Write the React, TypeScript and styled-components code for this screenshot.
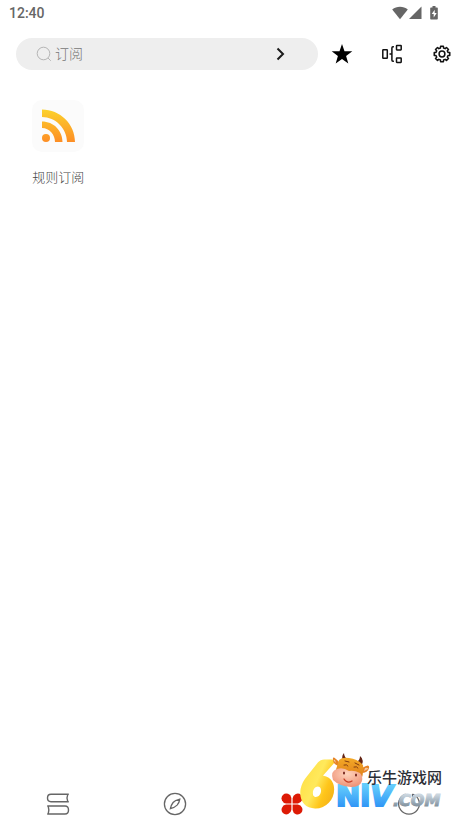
import React from "react";
import styled, { createGlobalStyle } from "styled-components";

const GlobalStyle = createGlobalStyle`
  *, *::before, *::after { box-sizing: border-box; }
  body {
    margin: 0;
    background: #fff;
    font-family: Roboto, "Noto Sans CJK SC", sans-serif;
  }
  button { border: 0; padding: 0; background: none; font: inherit; color: inherit; cursor: pointer; }
  svg { display: block; }
`;

const Screen = styled.div`
  position: relative;
  display: flex;
  flex-direction: column;
  min-height: 100vh;
  background: #fff;
`;

const StatusBar = styled.div`
  display: flex;
  align-items: center;
  justify-content: space-between;
  height: 26px;
  padding: 0 28px 0 9px;
  color: #666;
  font-size: 14px;
  font-weight: 500;
`;

const StatusIcons = styled.div`
  display: flex;
  align-items: center;
`;

const Header = styled.header`
  display: flex;
  align-items: center;
  padding: 12px 13px 0 16px;
`;

const SearchBox = styled.form`
  display: flex;
  flex: 1;
  min-width: 0;
  align-items: center;
  height: 32px;
  padding: 0 26px 0 20px;
  border-radius: 16px;
  background: #eee;
`;

const SearchInput = styled.input`
  flex: 1;
  min-width: 0;
  height: 24px;
  margin-left: 3px;
  padding: 0 0 2px;
  border: 0;
  outline: 0;
  background: none;
  font-family: "Noto Sans CJK SC", sans-serif;
  font-size: 14px;
  font-weight: 300;
  color: #333;
  &::placeholder { color: #777; opacity: 1; }
`;

const Actions = styled.div`
  display: flex;
  gap: 26px;
  margin-left: 12px;
`;

const IconButton = styled.button`
  display: grid;
  place-items: center;
  width: 24px;
  height: 24px;
`;

const Main = styled.main`
  flex: 1;
  display: grid;
  grid-template-columns: repeat(4, 1fr);
  align-items: start;
  padding-top: 30px;
`;

const Source = styled.button`
  display: flex;
  flex-direction: column;
  align-items: center;
  gap: 15px;
`;

const SourceIcon = styled.span`
  display: grid;
  place-items: center;
  width: 52px;
  height: 52px;
  border-radius: 10px;
  background: #fbfbfb;
`;

const SourceName = styled.span`
  font-family: "Noto Sans CJK SC", sans-serif;
  font-size: 13px;
  font-weight: 300;
  line-height: 20px;
  color: #444;
`;

const TabBar = styled.nav`
  display: grid;
  grid-template-columns: repeat(4, 1fr);
  height: 52px;
`;

const Tab = styled.button<{ $active?: boolean }>`
  display: grid;
  place-items: center;
  color: ${(p) => (p.$active ? "#dd1a05" : "#666")};
`;

const Watermark = styled.div`
  position: absolute;
  right: 20px;
  bottom: 12px;
  pointer-events: none;
`;

const WifiIcon = () => (
  <svg width="16" height="14" viewBox="0 0 16 14" fill="#666">
    <path d="M8 13.2.2 3.6C4.5-.2 11.500-.2 15.800 3.600Z" />
  </svg>
);
const SignalIcon = () => (
  <svg width="14" height="14" viewBox="0 0 14 14" fill="#666">
    <path d="M13.500.5v12.500H1Z" />
  </svg>
);
const BatteryIcon = () => (
  <svg width="17" height="14" viewBox="0 0 17 14">
    <path fill="#666" d="M10.500 0h3v1.500H15a.8.8 0 0 1 .8.8v10.400a.8.8 0 0 1-.8.8H9a.8.8 0 0 1-.8-.8V2.300a.8.8 0 0 1 .8-.8h1.500z" />
    <path fill="#fff" d="m12.700 3.800-3 4.200h2v3.500l3-4.600h-2z" />
  </svg>
);
const SearchIcon = () => (
  <svg width="16" height="16" viewBox="0 0 16 16" fill="none" stroke="#b5b5b5" strokeWidth="1">
    <circle cx="7.500" cy="7.500" r="6.300" />
    <path d="m12 12 2.800 2.800" />
  </svg>
);
const ChevronIcon = () => (
  <svg width="12" height="14" viewBox="0 0 12 14" fill="none" stroke="#1b1b1b" strokeWidth="2">
    <path d="m3.500 1.500 5.500 5.500-5.500 5.500" />
  </svg>
);
const StarIcon = () => (
  <svg width="22" height="22" viewBox="0 0 22 22" fill="#000">
    <path d="m11 1 2.500 7.200 7.800.1-6.200 4.700 2.200 7.500-6.300-4.400-6.300 4.400L6.900 13 .7 8.300l7.800-.1Z" />
  </svg>
);
const TreeIcon = () => (
  <svg width="22" height="20" viewBox="0 0 22 20" fill="none" stroke="#111" strokeWidth="1.500">
    <rect x="1.800" y="5.800" width="4.500" height="8.400" rx=".5" />
    <path d="M12.900 2.800h-1q-1 0-1 1.200v12q0 1.200 1 1.200h1M8.500 10h2.400" />
    <rect x="15.500" y="1.500" width="4.700" height="4.500" rx=".4" />
    <rect x="15.500" y="14" width="4.700" height="4.500" rx=".4" />
  </svg>
);

const gearPath = (() => {
  const points: string[] = [];
  const teeth = 8;
  for (let i = 0; i < teeth; i++) {
    const base = (i / teeth) * Math.PI * 2;
    [[-0.25, 6.2], [-0.18, 7.9], [0.18, 7.9], [0.25, 6.2]].forEach(([a, r]) => {
      points.push(`${(9 + Math.cos(base + a) * r).toFixed(2)} ${(9 + Math.sin(base + a) * r).toFixed(2)}`);
    });
  }
  return `M${points.join("L")}Z`;
})();
const GearIcon = () => (
  <svg width="18" height="18" viewBox="0 0 18 18" fill="none" stroke="#111" strokeWidth="1.500" strokeLinejoin="round">
    <path d={gearPath} />
    <circle cx="9" cy="9" r="2.900" />
  </svg>
);
const RssIcon = () => (
  <svg width="34" height="34" viewBox="0 0 34 34">
    <defs>
      <linearGradient id="rss" x1="0" y1="0" x2="0" y2="34" gradientUnits="userSpaceOnUse">
        <stop offset="0" stopColor="#fcd32c" />
        <stop offset="1" stopColor="#fd8c25" />
      </linearGradient>
    </defs>
    <g fill="url(#rss)">
      <path d="M1 .5c18 0 33 14.500 33 32.500h-8C26 19.500 14.500 8 1 8Z" />
      <path d="M1 12.500c11.500 0 20.500 9 20.500 20.500h-7.500C14 25.500 8.500 19 1 19Z" />
      <circle cx="5" cy="29" r="4" />
    </g>
  </svg>
);
const BooksIcon = () => (
  <svg width="24" height="24" viewBox="0 0 24 24" fill="none" stroke="currentColor" strokeWidth="1.400">
    <path d="M22.800 2.300H5Q1.500 2.300 1.500 6T5 9.700h17.800M21.800 2.300q-1.600 3.700 0 7.400" />
    <path d="M1.200 14H19q3.500 0 3.500 4T19 22H1.200M2.200 14q1.300 4 0 8" />
  </svg>
);
const CompassIcon = () => (
  <svg width="24" height="24" viewBox="0 0 24 24" fill="none" stroke="currentColor" strokeWidth="1.300">
    <circle cx="12" cy="12" r="10.600" />
    <path d="M16.800 7.200q-4.800 1.100-6.700 3.300-2 2.500-2.700 6.200 4.500-1.400 6.700-3.600 2.200-2.400 2.700-5.900Z" />
  </svg>
);
const CloverIcon = () => (
  <svg width="22" height="22" viewBox="0 0 22 22" fill="currentColor">
    {[0, 90, 180, 270].map((a) => (
      <path key={a} transform={`rotate(${a} 11 11)`} d="M10.400 10.400H5.200A5.100 5.100 0 0 1 1.900 1.900 5.100 5.100 0 0 1 10.400 5Z" />
    ))}
  </svg>
);
const FaceIcon = () => (
  <svg width="24" height="24" viewBox="0 0 24 24" fill="none" stroke="currentColor" strokeWidth="1.300">
    <path d="M8.500 2A10.400 10.400 0 1 0 15.500 2" />
    <path d="M15.500 2v3" />
  </svg>
);

const SiteLogo = () => (
  <svg width="150" height="74" viewBox="0 -6 150 74" overflow="visible" role="img" aria-label="6NiV.COM 乐牛游戏网">
    <defs>
      <linearGradient id="gold" x1="0" y1="0" x2="1" y2="1">
        <stop offset=".1" stopColor="#ffdd3f" />
        <stop offset=".5" stopColor="#ffe95c" />
        <stop offset=".7" stopColor="#ffc51a" />
        <stop offset="1" stopColor="#eda718" />
      </linearGradient>
      <linearGradient id="blue" x1="0" y1="0" x2="0" y2="1">
        <stop offset=".2" stopColor="#64ccfc" />
        <stop offset=".8" stopColor="#3197f6" />
      </linearGradient>
      <linearGradient id="silver" x1="0" y1="0" x2="0" y2="1">
        <stop offset=".2" stopColor="#cbd6df" />
        <stop offset=".8" stopColor="#82929f" />
      </linearGradient>
      <linearGradient id="fur" x1="0" y1="0" x2="0" y2="1">
        <stop offset="0" stopColor="#f4aa27" />
        <stop offset="1" stopColor="#db7718" />
      </linearGradient>
      <radialGradient id="muzzle" cx=".5" cy=".3" r=".7">
        <stop offset="0" stopColor="#ffd4bc" />
        <stop offset="1" stopColor="#ee9276" />
      </radialGradient>
    </defs>
    <text x="3" y="56" fontFamily="Lato, sans-serif" fontWeight="900" fontStyle="italic" fontSize="60" fill="url(#gold)" stroke="url(#gold)" strokeWidth="5" strokeLinejoin="round">6</text>
    <text x="39" y="56" fontFamily="DejaVu Sans, sans-serif" fontWeight="700" fontSize="29" fill="url(#blue)" stroke="url(#blue)" strokeWidth="2">
      Ni<tspan fontStyle="italic">V</tspan>
    </text>
    <g transform="translate(2 3)">
      <path d="M44 8q-2-5 1-8 0 5 5 7ZM57 9q4-1 4-6 5 4 1 10Z" fill="#642414" />
      <path d="M40 9q-7-8-6-2 0 4 5 6ZM63 15q8-5 7 0-1 5-8 5Z" fill="#e58325" />
      <path d="M36 7q-2-1-1 1l2 2ZM66 15q3-1 3 1l-4 2Z" fill="#f6c7a2" />
      <path d="M40 7q3-3 10-2 9 1 14 7 1 7-2 16L35 22Q38 14 40 7Z" fill="url(#fur)" />
      <path d="M38 16q6-2 12 2 5-1 11 2 3 3 2 8-2 6-11 6-12-1-18-7-3-9 4-11Z" fill="url(#muzzle)" />
      <g fill="none" stroke="#74300f" strokeLinecap="round">
        <path d="m46 8 4 1m-5 3q3-1 4 1m7-3 4 2m-5 2q3-1 4 1" strokeWidth=".9" />
        <path d="M45 26q3 5 8 2" stroke="#c43c24" strokeWidth="1.300" />
      </g>
      <ellipse cx="45" cy="20" rx="1" ry="1.500" fill="#74251c" />
      <ellipse cx="57" cy="22" rx="1" ry="1.500" fill="#74251c" />
    </g>
    <text x="96" y="56" fontFamily="DejaVu Sans, sans-serif" fontWeight="700" fontStyle="italic" fontSize="16" fill="url(#silver)" stroke="url(#silver)" strokeWidth="1">.COM</text>
    <text x="70" y="33" fontFamily="Noto Sans CJK SC, sans-serif" fontWeight="500" fontSize="15" fill="#2b2e36">乐牛游戏网</text>
  </svg>
);

const tabs = [
  { label: "书架", icon: <BooksIcon /> },
  { label: "发现", icon: <CompassIcon /> },
  { label: "订阅", icon: <CloverIcon />, active: true },
  { label: "我的", icon: <FaceIcon /> },
];

export default function App() {
  return (
    <>
      <GlobalStyle />
      <Screen>
        <StatusBar>
          <time>12:40</time>
          <StatusIcons>
            <WifiIcon />
            <SignalIcon />
            <BatteryIcon />
          </StatusIcons>
        </StatusBar>
        <Header>
          <SearchBox onSubmit={(e) => e.preventDefault()}>
            <SearchIcon />
            <SearchInput type="text" placeholder="订阅" aria-label="订阅" />
            <IconButton type="submit" aria-label="搜索"><ChevronIcon /></IconButton>
          </SearchBox>
          <Actions>
            <IconButton type="button" aria-label="收藏"><StarIcon /></IconButton>
            <IconButton type="button" aria-label="分组"><TreeIcon /></IconButton>
            <IconButton type="button" aria-label="设置"><GearIcon /></IconButton>
          </Actions>
        </Header>
        <Main>
          <Source type="button">
            <SourceIcon><RssIcon /></SourceIcon>
            <SourceName>规则订阅</SourceName>
          </Source>
        </Main>
        <TabBar>
          {tabs.map((tab) => (
            <Tab key={tab.label} type="button" aria-label={tab.label} $active={tab.active}>
              {tab.icon}
            </Tab>
          ))}
        </TabBar>
        <Watermark><SiteLogo /></Watermark>
      </Screen>
    </>
  );
}
